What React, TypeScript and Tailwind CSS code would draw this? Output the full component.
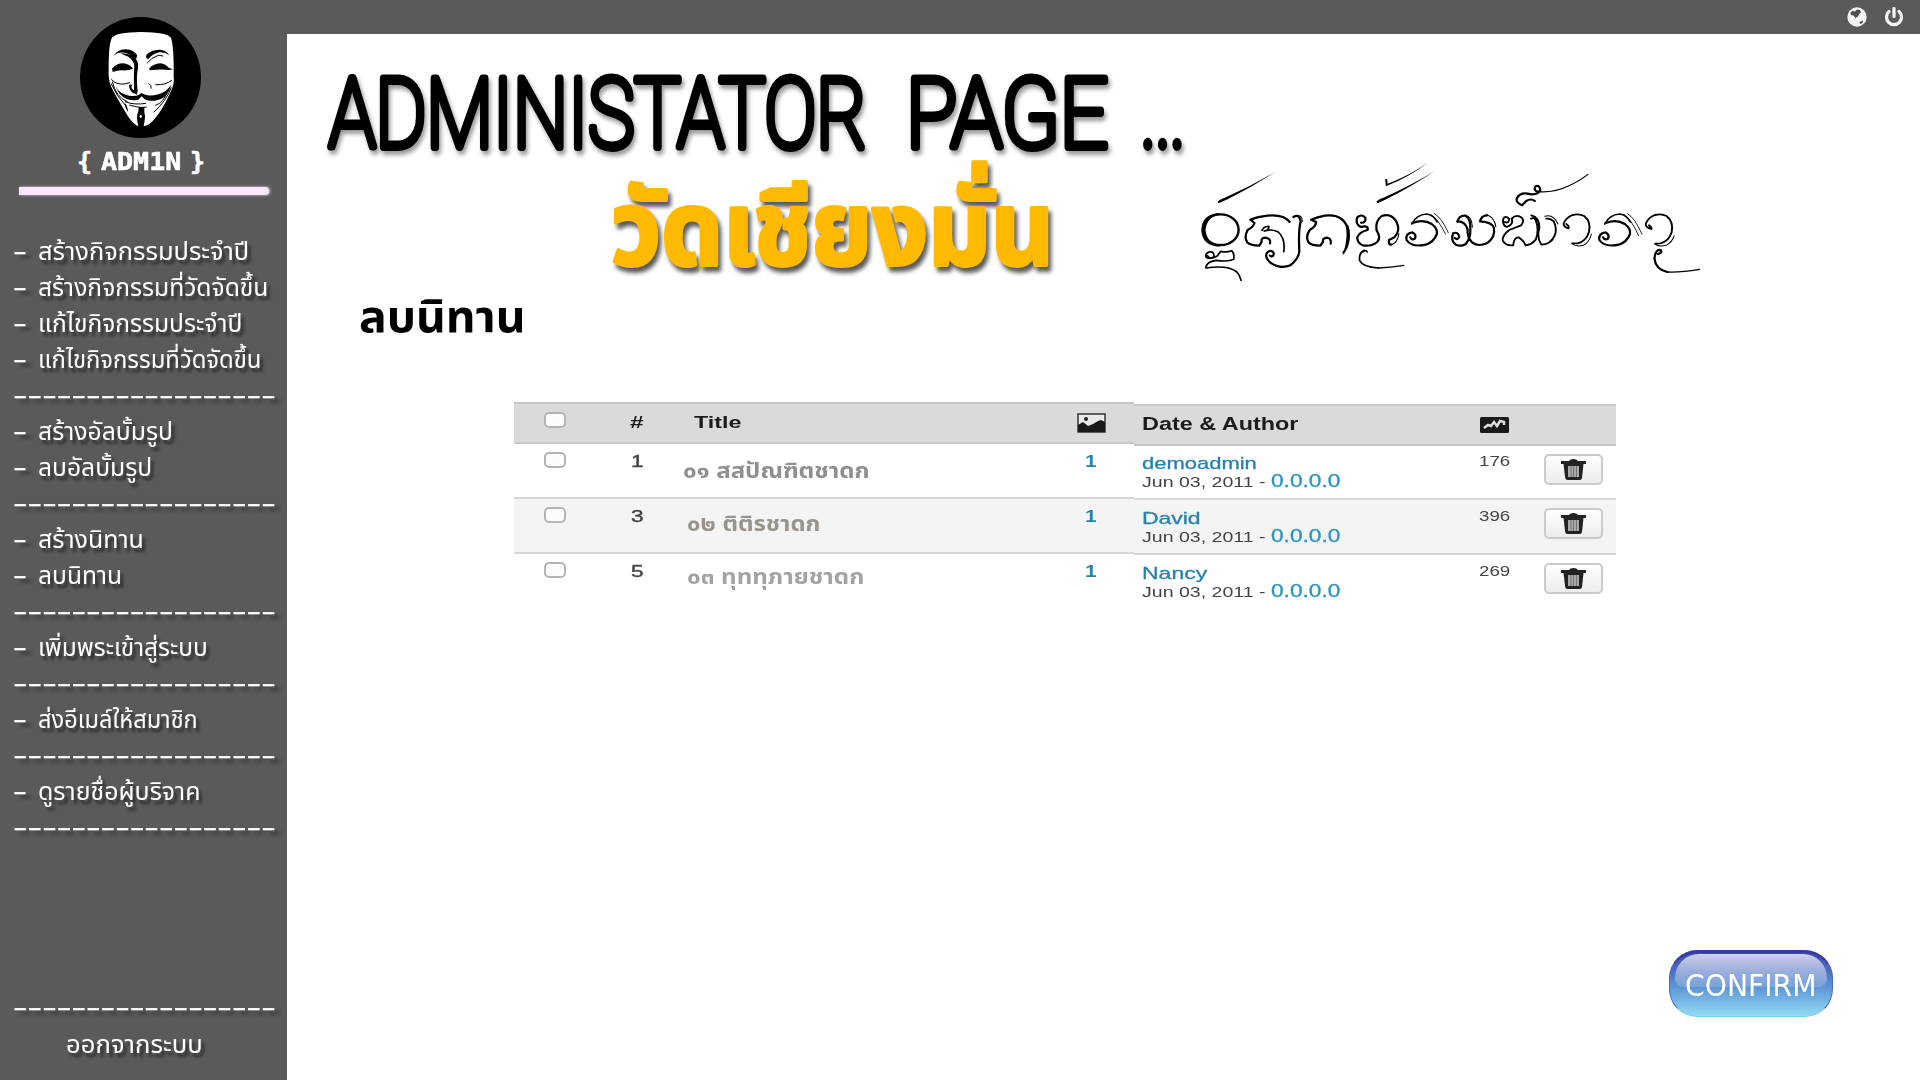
import React, { useLayoutEffect, useRef, useState } from "react";

type FitProps = { width: number; className?: string; children: React.ReactNode };

/** Text stretched horizontally so that it fills the given width. */
function Fit({ width, className = "", children }: FitProps) {
  const ref = useRef<HTMLSpanElement>(null);
  const [scale, setScale] = useState(1);
  useLayoutEffect(() => {
    if (ref.current) setScale(width / ref.current.offsetWidth);
  }, [width]);
  return (
    <span className={`block shrink-0 whitespace-nowrap ${className}`} style={{ width }}>
      <span ref={ref} className="inline-block origin-left" style={{ transform: `scaleX(${scale})` }}>
        {children}
      </span>
    </span>
  );
}

const MENU: (null | [string, number])[] = [
  ["สร้างกิจกรรมประจำปี", 211],
  ["สร้างกิจกรรมที่วัดจัดขึ้น", 230],
  ["แก้ไขกิจกรรมประจำปี", 204],
  ["แก้ไขกิจกรรมที่วัดจัดขึ้น", 224],
  null,
  ["สร้างอัลบั้มรูป", 135],
  ["ลบอัลบั้มรูป", 114],
  null,
  ["สร้างนิทาน", 106],
  ["ลบนิทาน", 84],
  null,
  ["เพิ่มพระเข้าสู่ระบบ", 170],
  null,
  ["ส่งอีเมล์ให้สมาชิก", 160],
  null,
  ["ดูรายชื่อผู้บริจาค", 162],
  null,
];

function Dashes() {
  return (
    <div className="flex h-9 items-center pb-[4px] pl-[13px]">
      <Fit width={263} className="[-webkit-text-stroke:0.4px_white]">------------------</Fit>
    </div>
  );
}

function Mask() {
  return (
    <svg className="h-[121px] w-[121px]" viewBox="240 51 363 363">
      <circle cx="421.500" cy="232.500" r="181.500" fill="#000" />
      <path
        d="M336 113Q348 97 424 96Q500 97 513 113Q522 140 521 228Q524 252 512 275Q490 325 466 354Q448 377 434 378L411 377Q392 366 374 332Q345 285 333 259Q324 240 326 200Q326 130 336 113Z"
        fill="#fff"
      />
      <g fill="#000">
        <path d="M340 168Q355 146 378 148Q402 150 411 165Q412 175 405 178Q392 161 372 158Q352 156 340 168Z" />
        <path d="M508 166Q495 147 470 150Q444 154 438 168Q438 176 444 178Q458 162 477 157Q494 155 508 166Z" />
        <path d="M336 206Q350 190 369 190Q387 191 399 206Q385 212 366 211Q350 211 338 216Z" />
        <path d="M447 206Q461 191 480 190Q498 192 507 204L520 208L506 210Q486 207 449 211Z" />
        <path d="M398 168Q418 180 414 205Q408 230 413 274L410 284Q402 282 402 268Q401 215 403 201Q403 183 385 170L360 160Q385 161 398 168Z" />
        <path d="M347 259Q356 282 392 288Q410 289 417 284L424 279L432 283Q450 290 475 283Q502 274 513 254Q505 296 464 302Q445 304 434 298L425 289L415 299Q397 303 380 297Q355 286 347 259Z" />
        <path d="M416 321L433 321Q432 336 435 348Q435 358 431 378L415 378Q409 355 412 342Q417 334 416 321Z" />
        <path d="M387 255Q392 252 397 254Q391 262 399 269L406 272Q408 279 402 281Q386 270 387 255Z" />
        <path d="M374 309Q383 317 384 337Q375 325 374 309Z" />
      </g>
      <g fill="none" stroke="#000" strokeWidth="3">
        <path d="M334 238Q348 254 372 252L390 248M333 250Q350 290 378 318M337 245Q347 290 383 306M466 254Q498 256 516 240M514 262Q501 300 461 337M507 266Q490 310 466 316M388 315Q420 325 440 321M441 190Q454 172 475 166L490 168M446 250Q456 256 453 266M375 305Q403 316 438 310" />
      </g>
      <path d="M422 344l5 5l-5 6l-4-6z" fill="#fff" />
    </svg>
  );
}

function Calligraphy() {
  return (
    <svg className="h-[140px] w-[540px] shrink-0" viewBox="0 0 1566 420" preserveAspectRatio="none">
      <g fill="none" stroke="#000" strokeWidth="6.500" strokeLinecap="round" strokeLinejoin="round">
        <ellipse cx="118" cy="239" rx="52" ry="46" strokeWidth="7" />
        <path d="M80 318Q88 330 98 320Q100 303 84 306Q72 311 76 322Q86 330 108 318L118 304Q135 308 150 302Q158 310 156 328Q140 336 105 331Q76 335 75 354Q140 344 165 366Q174 376 177 391" strokeWidth="5" />
        <path d="M318 216Q300 192 254 197Q225 200 204 209L216 219Q212 232 196 240Q185 262 195 277Q205 286 230 287L237 275Q234 264 247 263Q264 265 261 280" />
        <path d="M238 241Q244 227 258 230Q256 244 244 243Q266 236 285 246Q306 265 301 305" strokeWidth="5" />
        <path d="M329 201Q346 190 350 215Q343 240 346 303Q345 325 320 346Q290 358 262 338Q244 320 253 307Q265 297 272 309Q271 324 261 317" />
        <path d="M340 196Q354 196 355 214" strokeWidth="3" />
        <path d="M474 308Q494 282 488 240Q475 190 420 197Q398 201 380 209L395 216Q393 231 377 239Q363 260 372 276Q380 287 407 287L415 275Q412 265 425 263Q440 264 437 281" />
        <path d="M525 218Q538 220 538 204Q527 190 514 202Q507 221 524 231Q548 225 544 240Q520 246 514 262Q514 280 530 286Q556 290 572 276Q584 262 570 241Q566 212 585 198Q612 188 627 214Q641 242 622 262L606 270Q604 282 612 284" />
        <path d="M606 284Q630 286 635 251" strokeWidth="3" />
        <path d="M530 306Q539 298 543 306M534 301Q518 309 521 332Q530 351 575 354" strokeWidth="5" />
        <path d="M575 354Q610 353 649 346" strokeWidth="4" />
        <path d="M672 222Q685 194 715 192Q735 194 746 216" strokeWidth="5" />
        <path d="M674 219Q706 206 730 222Q748 236 745 252Q736 276 713 284Q672 293 657 270Q653 250 674 247Q687 254 681 266Q672 272 668 262" />
        <path d="M738 191Q758 202 778 248M728 194Q748 206 770 252" strokeWidth="2.500" />
        <path d="M804 215Q810 195 828 197Q844 208 842 240Q843 264 829 282Q814 291 800 284Q784 272 792 250Q806 244 810 260Q805 272 797 264M806 214Q827 214 834 238Q832 262 848 278Q864 291 890 280Q916 262 910 232Q904 216 870 214Q874 196 891 196" />
        <path d="M888 194Q912 200 916 230M828 196Q846 200 848 232" strokeWidth="3" />
        <path d="M942 216Q953 222 955 207Q942 194 937 208Q935 226 948 231Q968 223 962 206Q976 191 991 203Q1000 214 989 226L955 240Q934 256 936 272Q944 288 966 286Q968 262 982 262Q1000 276 1002 286Q1020 284 1032 268Q1042 240 1032 212Q1028 200 1018 206M1019 196Q1043 202 1042 235Q1034 263 1048 284Q1074 284 1086 258Q1095 238 1084 214Q1074 204 1062 206" strokeWidth="5.500" />
        <path d="M1058 199Q1082 190 1096 222" strokeWidth="3" />
        <path d="M1120 222Q1130 230 1127 235Q1110 231 1113 219Q1120 203 1138 195Q1158 190 1172 198Q1193 215 1186 246Q1177 275 1153 280L1137 280" strokeWidth="5.500" />
        <path d="M1137 281Q1150 292 1170 286Q1188 276 1193 252" strokeWidth="3" />
        <path d="M1232 222Q1245 194 1275 192Q1295 194 1306 216" strokeWidth="5" />
        <path d="M1234 219Q1266 206 1290 222Q1308 236 1305 252Q1296 276 1273 284Q1232 293 1216 270Q1213 250 1234 247Q1247 254 1241 266Q1232 272 1227 262" />
        <path d="M1298 191Q1318 202 1340 253M1288 194Q1308 206 1330 257" strokeWidth="2.500" />
        <path d="M1360 226Q1370 234 1367 237Q1348 232 1351 220Q1358 203 1377 195Q1397 190 1411 198Q1432 216 1426 246Q1417 275 1393 280L1378 281" strokeWidth="5.500" />
        <path d="M1378 282Q1390 292 1410 286Q1428 276 1433 257" strokeWidth="3" />
        <path d="M1386 312Q1400 308 1394 300Q1378 298 1376 326Q1379 358 1413 366" />
        <path d="M1413 366Q1450 368 1507 358" strokeWidth="4" />
        <path d="M1029 153Q1018 144 1004 153L992 166Q973 158 977 145Q986 127 1008 131Q1036 138 1045 120Q1043 104 1031 109Q1024 122 1038 125" />
        <path d="M1038 125Q1084 129 1128 107Q1160 92 1183 73" strokeWidth="3.500" />
      </g>
      <g fill="#000">
        <path d="M109 156Q113 149 130 143Q208 108 280 63Q212 110 138 148L112 160Z" />
        <path d="M569 156Q573 149 590 143Q667 108 739 63Q671 110 598 148L573 160Z" />
        <path d="M595 87L601 88L602 101Q660 80 721 37Q660 84 605 105L597 109Z" />
        <path d="M62 240Q64 190 118 189Q78 200 74 240Q78 280 118 290Q64 290 62 240ZM488 225Q502 270 471 318Q489 265 480 225Z" />
      </g>
    </svg>
  );
}

const ROWS = [
  { n: "1", title: "๐๑ สสปัณฑิตชาดก", w: 187, pad: "pl-[2px] pt-[10px]", tone: "text-[#8f8f8f]", author: "demoadmin", aw: 115, views: "176", bg: "" },
  { n: "3", title: "๐๒ ติติรชาดก", w: 133, pad: "pl-[6px] pt-[8px]", tone: "text-[#99938e]", author: "David", aw: 58, views: "396", bg: "bg-[#f4f4f4]" },
  { n: "5", title: "๐๓ ทุททุภายชาดก", w: 177, pad: "pl-[6px] pt-[6px]", tone: "text-[#a3a3a3]", author: "Nancy", aw: 65, views: "269", bg: "" },
];

function Check() {
  return (
    <span className="block h-4 w-[22px] rounded-[5px] border-2 border-[#b4b4b4] bg-[#fcfcfc]" />
  );
}

function Trash() {
  return (
    <span className="flex h-[31px] w-[59px] items-center justify-center rounded-[5px] border-2 border-[#cbcbcb] bg-linear-to-b from-white to-[#ececec]">
      <svg className="h-[21px] w-[25px]" viewBox="0 0 25 21">
        <path d="M0 2h8q1-2 4.500-2T17 2h8v3H0z" fill="#222" />
        <path d="M2.500 5h20l-1.500 14q-.3 2-2.500 2h-12q-2 0-2.300-2z" fill="#222" />
        <path d="M7 7h11v11H7z" fill="#a8a8a8" />
        <path d="M10 7v11M12.500 7v11M15.500 7v11" stroke="#777" strokeWidth="1" />
      </svg>
    </span>
  );
}

export default function App() {
  return (
    <div className="flex h-[1080px] w-[1920px] overflow-hidden bg-[#5a5a5a] font-['Liberation_Sans','Noto_Sans_Thai',sans-serif]">
      <aside className="flex w-[287px] shrink-0 flex-col text-white">
        <div className="flex h-[235px] flex-col pt-[17px]">
          <div className="pl-20">
            <Mask />
          </div>
          <div className="mt-[7px] flex h-[34px] items-center gap-[9px] pl-[77px] font-['DejaVu_Sans_Mono',monospace] text-[25px] leading-[34px] font-bold [-webkit-text-stroke:0.6px_white]">
            <Fit width={15}>{"{"}</Fit>
            <Fit width={80}>ADM1N</Fit>
            <Fit width={15}>{"}"}</Fit>
          </div>
          <div className="mt-[8px] ml-[19px] h-2 w-[250px] rounded-r-full bg-[#fbe6fb] shadow-[1px_0_3px_#e8c8e8]" />
        </div>
        <nav className="text-[24px] leading-9 [text-shadow:3px_4px_3px_rgba(0,0,0,0.55)]">
          {MENU.map((m, i) =>
            m ? (
              <div key={i} className="flex h-9 items-center pb-[2px] pl-[13px]">
                <Fit width={14} className="-mt-[3px] [-webkit-text-stroke:0.4px_white]">-</Fit>
                <Fit width={m[1]} className="ml-[11px]">
                  {m[0]}
                </Fit>
              </div>
            ) : (
              <Dashes key={i} />
            ),
          )}
          <div className="h-36" />
          <Dashes />
          <div className="flex h-9 items-center pl-[66px]">
            <Fit width={137}>ออกจากระบบ</Fit>
          </div>
        </nav>
      </aside>

      <div className="flex flex-1 flex-col">
        <header className="flex h-[34px] shrink-0 items-center justify-end gap-[17px] pr-4">
          <svg className="h-5 w-5" viewBox="0 0 20 20">
            <circle cx="10" cy="10" r="9.700" fill="#f4f4f4" />
            <path d="M3.500 5.500l2-1.500 2.500.5 2-2 3 .5 1 2.500-2 1.500-1 2.500-2.500 1.500-2-2.500-2.500-.5zM12.500 15l3.500-1.500-.5 2.500-2.500 1z" fill="#4c4c4c" />
          </svg>
          <svg className="h-5 w-5" viewBox="0 0 20 20" fill="none" stroke="#f4f4f4" strokeWidth="3.200" strokeLinecap="round">
            <path d="M5 4.500a7.500 7.500 0 1 0 10 0M10 1.500v8" />
          </svg>
        </header>

        <main className="flex flex-1 flex-col bg-white">
          <h1 className="h-[126px] pl-[20px]">
            <svg
              className="h-[126px] w-[900px] overflow-visible font-['Roboto',sans-serif] text-[97px] font-thin drop-shadow-[2px_4px_2px_rgba(0,0,0,0.4)]"
              viewBox="0 0 900 126"
              fill="#000"
              stroke="#000"
              strokeWidth="8"
              strokeLinejoin="round"
            >
              <text x="22" y="113" textLength="538" lengthAdjust="spacingAndGlyphs">ADMINISTATOR</text>
              <text x="599" y="113" textLength="202" lengthAdjust="spacingAndGlyphs">PAGE</text>
              <text x="834" y="113" textLength="44" lengthAdjust="spacingAndGlyphs">...</text>
            </svg>
          </h1>
          <div className="flex h-[130px] pl-[322px]">
            <h2 className="w-[571px]">
              <svg
                className="h-[130px] w-[560px] overflow-visible text-[103px] font-bold drop-shadow-[3px_5px_2px_rgba(0,0,0,0.65)]"
                viewBox="0 0 560 130"
                fill="#ffb900"
                stroke="#ffb900"
                strokeWidth="4"
                strokeLinejoin="round"
              >
                <text x="2" y="105" textLength="443" lengthAdjust="spacingAndGlyphs">วัดเชียงมั่น</text>
              </svg>
            </h2>
            <div className="-mt-[10px]">
              <Calligraphy />
            </div>
          </div>
          <h3 className="h-[112px] pl-[72px] text-[44px] leading-[54px] font-bold text-black">
            <Fit width={167}>ลบนิทาน</Fit>
          </h3>

          <section className="ml-[227px] flex h-[204px] text-[#444]">
            <div className="w-[620px]">
              <div className="flex h-[42px] items-center border-y-2 border-[#c6c6c6] bg-[#dadada] pl-[30px] text-[17px] font-bold text-[#1c1c1c]">
                <span className="-mt-[6px]"><Check /></span>
                <Fit width={13} className="ml-[64px]">#</Fit>
                <Fit width={48} className="ml-[51px]">Title</Fit>
                <svg className="ml-[335px] h-5 w-[29px]" viewBox="0 0 29 20">
                  <rect x="1" y="1" width="27" height="18" fill="#e9e9e9" stroke="#333" strokeWidth="1.500" />
                  <path d="M1 19v-7l5-3 5 4 5-2 5-3 3-1 4 2v10z" fill="#1a1a1a" />
                  <circle cx="9" cy="6" r="2" fill="#222" />
                </svg>
              </div>
              {ROWS.map((r) => (
                <div key={r.n} className={`flex h-[54.800px] border-b-2 border-[#d6d6d6] last:border-0 ${r.bg}`}>
                  <span className="pt-[8px] pl-[30px]">
                    <Check />
                  </span>
                  <Fit width={12} className="ml-[65px] pt-[5px] text-[17px] [-webkit-text-stroke:0.4px_#444]">{r.n}</Fit>
                  <div className={`ml-[38px] w-[403px] text-[22px] leading-[34px] font-bold ${r.pad} ${r.tone}`}>
                    <Fit width={r.w}>{r.title}</Fit>
                  </div>
                  <Fit width={11} className="pt-[5px] pl-[1px] text-[17px] font-bold text-[#2583ad]">1</Fit>
                </div>
              ))}
            </div>
            <div className="w-[482px] pt-[1.500px]">
              <div className="flex h-[42px] items-center border-y-2 border-[#c6c6c6] bg-[#dadada] pl-[8px] text-[18px] font-bold text-[#1c1c1c]">
                <Fit width={156}>Date &amp; Author</Fit>
                <svg className="ml-[182px] h-4 w-[29px]" viewBox="0 0 29 16">
                  <rect width="29" height="16" rx="1.500" fill="#1a1a1a" />
                  <path d="M4 11l4-3 3 1 3-4 3 4 3-5 4 1v3" fill="none" stroke="#ddd" strokeWidth="2.500" />
                </svg>
              </div>
              {ROWS.map((r) => (
                <div key={r.n} className={`flex h-[54.800px] border-b-2 border-[#d6d6d6] last:border-0 ${r.bg}`}>
                  <div className="w-[345px] pt-[8.500px] pl-[8px]">
                    <Fit width={r.aw} className="text-[17px] leading-5 text-[#2583ad] [-webkit-text-stroke:0.3px_#2583ad]">{r.author}</Fit>
                    <div className="-mt-px flex gap-[5px] leading-[18px]">
                      <Fit width={124} className="text-[14.500px]">Jun 03, 2011 -</Fit>
                      <Fit width={70} className="-mt-px text-[17.500px] text-[#2a95bf] [-webkit-text-stroke:0.3px_#2a95bf]">0.0.0.0</Fit>
                    </div>
                  </div>
                  <Fit width={31} className="pt-[5.500px] text-[14.500px] leading-5">{r.views}</Fit>
                  <span className="pt-[8px] pl-[33.500px]">
                    <Trash />
                  </span>
                </div>
              ))}
            </div>
          </section>

          <div className="mt-auto mr-[87px] mb-[63px] self-end">
            <button className="relative flex h-[67px] w-[164px] justify-center overflow-hidden rounded-[28px] border border-t-3 border-[#4a6cc0] border-t-[#343ba5] border-b-[#7fc8e8] bg-linear-to-b from-[#4048b0] via-[#5b8fd0] to-[#92dcf6]">
              <span className="absolute top-[1px] left-[5px] h-[33px] w-[152px] rounded-t-[24px] rounded-b-[8px] bg-linear-to-b from-white/75 to-white/15" />
              <span className="relative font-['DejaVu_Sans',sans-serif] text-[31px] leading-[64px] text-white">
                <Fit width={132}>CONFIRM</Fit>
              </span>
            </button>
          </div>
        </main>
      </div>
    </div>
  );
}
